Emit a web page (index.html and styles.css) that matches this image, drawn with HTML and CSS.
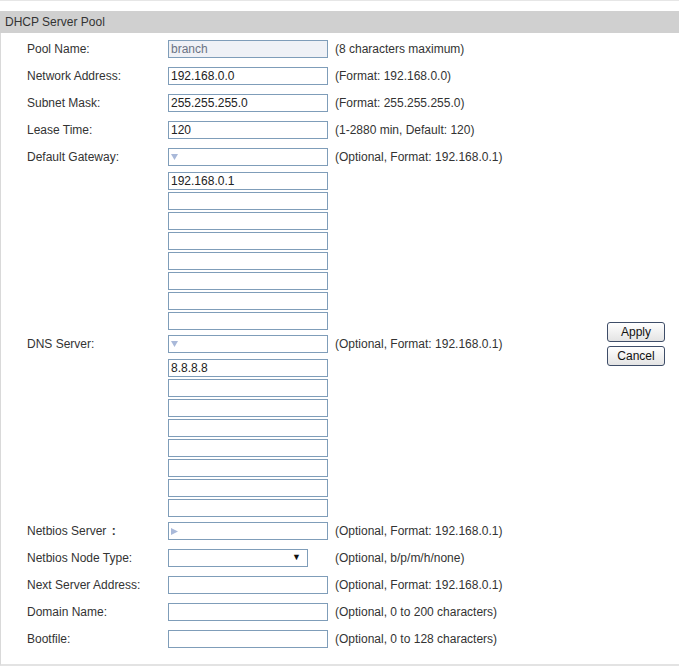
FILE: index.html
```html
<!DOCTYPE html>
<html lang="en">
<head>
    <meta charset="UTF-8">
    <title>DHCP Server Pool</title>
    <link rel="stylesheet" href="styles.css">
</head>
<body>
    <div class="page">
        <div class="panel">
            <div class="panel-title">DHCP Server Pool</div>
            <div class="panel-body">
                <div class="form">
                    <div class="row">
                        <label class="label">Pool Name:</label>
                        <input class="field field-disabled" type="text" value="branch" disabled>
                        <span class="note">(8 characters maximum)</span>
                    </div>
                    <div class="row">
                        <label class="label">Network Address:</label>
                        <input class="field" type="text" value="192.168.0.0">
                        <span class="note">(Format: 192.168.0.0)</span>
                    </div>
                    <div class="row">
                        <label class="label">Subnet Mask:</label>
                        <input class="field" type="text" value="255.255.255.0">
                        <span class="note">(Format: 255.255.255.0)</span>
                    </div>
                    <div class="row">
                        <label class="label">Lease Time:</label>
                        <input class="field" type="text" value="120">
                        <span class="note">(1-2880 min, Default: 120)</span>
                    </div>
                    <div class="row">
                        <label class="label">Default Gateway:</label>
                        <div class="field toggle">
                            <svg width="7" height="6" viewBox="0 0 7 6"><polygon points="0,0 7,0 3.5,6" fill="#a9b9d9"/></svg>
                        </div>
                        <span class="note">(Optional, Format: 192.168.0.1)</span>
                    </div>
                    <div class="list">
                        <input class="field" type="text" value="192.168.0.1">
                        <input class="field" type="text">
                        <input class="field" type="text">
                        <input class="field" type="text">
                        <input class="field" type="text">
                        <input class="field" type="text">
                        <input class="field" type="text">
                        <input class="field" type="text">
                    </div>
                    <div class="row">
                        <label class="label">DNS Server:</label>
                        <div class="field toggle">
                            <svg width="7" height="6" viewBox="0 0 7 6"><polygon points="0,0 7,0 3.5,6" fill="#a9b9d9"/></svg>
                        </div>
                        <span class="note">(Optional, Format: 192.168.0.1)</span>
                    </div>
                    <div class="list">
                        <input class="field" type="text" value="8.8.8.8">
                        <input class="field" type="text">
                        <input class="field" type="text">
                        <input class="field" type="text">
                        <input class="field" type="text">
                        <input class="field" type="text">
                        <input class="field" type="text">
                        <input class="field" type="text">
                    </div>
                    <div class="row">
                        <label class="label">Netbios Server <b class="colon">:</b></label>
                        <div class="field toggle">
                            <svg width="7" height="7" viewBox="0 0 7 7"><polygon points="0,0 7,3.5 0,7" fill="#a9b9d9"/></svg>
                        </div>
                        <span class="note">(Optional, Format: 192.168.0.1)</span>
                    </div>
                    <div class="row">
                        <label class="label">Netbios Node Type:</label>
                        <div class="select-wrap">
                            <select class="select">
                                <option></option>
                                <option>b-node</option>
                                <option>p-node</option>
                                <option>m-node</option>
                                <option>h-node</option>
                            </select>
                        </div>
                        <span class="note">(Optional, b/p/m/h/none)</span>
                    </div>
                    <div class="row">
                        <label class="label">Next Server Address:</label>
                        <input class="field" type="text">
                        <span class="note">(Optional, Format: 192.168.0.1)</span>
                    </div>
                    <div class="row">
                        <label class="label">Domain Name:</label>
                        <input class="field" type="text">
                        <span class="note">(Optional, 0 to 200 characters)</span>
                    </div>
                    <div class="row">
                        <label class="label">Bootfile:</label>
                        <input class="field" type="text">
                        <span class="note">(Optional, 0 to 128 characters)</span>
                    </div>
                </div>
                <div class="actions">
                    <button class="btn">Apply</button>
                    <button class="btn">Cancel</button>
                </div>
            </div>
        </div>
    </div>
</body>
</html>
```

FILE: styles.css
```css
body {
    margin: 0;
    font-family: "Liberation Sans", Arial, sans-serif;
    font-size: 12px;
    color: #333333;
    background: #ffffff;
}

.page {
    border-top: 1px solid #e6e6e6;
    padding-top: 10px;
}

.panel {
    border-left: 1px solid #d9d9d9;
    border-bottom: 2px solid #e3e3e3;
}

.panel-title {
    background-color: #d0d0d0;
    height: 22px;
    line-height: 22px;
    padding-left: 5px;
    margin-left: -1px;
}

.panel-body {
    display: flex;
    align-items: center;
    justify-content: space-between;
    padding: 3px 14px 11px 26px;
}

.row {
    display: flex;
    align-items: center;
    height: 27px;
    box-sizing: border-box;
    padding: 4px 0 5px;
}

.label {
    width: 141px;
    flex: none;
}

.colon {
    margin-left: 2px;
}

.field {
    width: 160px;
    height: 18px;
    box-sizing: border-box;
    border: 1px solid #7f9db9;
    padding: 0 2px;
    margin: 0;
    font-family: "Liberation Sans", Arial, sans-serif;
    font-size: 12px;
    color: #222222;
    background: #ffffff;
    outline: none;
    flex: none;
}

.field-disabled {
    background: #eff1f6;
    color: #6b7384;
}

.toggle {
    display: flex;
    align-items: center;
    padding-left: 2px;
}

.note {
    margin-left: 7px;
}

.list {
    display: flex;
    flex-direction: column;
    gap: 2px;
    padding: 1px 0 1px 141px;
}

.select-wrap {
    position: relative;
    width: 140px;
    height: 18px;
    margin-right: 20px;
    flex: none;
}

.select {
    appearance: none;
    -webkit-appearance: none;
    width: 100%;
    height: 18px;
    box-sizing: border-box;
    border: 1px solid #7f9db9;
    background: #ffffff;
    margin: 0;
    font-family: "Liberation Sans", Arial, sans-serif;
    font-size: 12px;
    outline: none;
}

.select-wrap::after {
    content: "\25BC";
    position: absolute;
    right: 7px;
    top: 3px;
    font-size: 9px;
    color: #111111;
    pointer-events: none;
}

.actions {
    display: flex;
    flex-direction: column;
    gap: 4px;
    margin-bottom: 1px;
}

.btn {
    width: 58px;
    height: 20px;
    box-sizing: border-box;
    border: 1px solid #3e4d68;
    border-radius: 3px;
    background: linear-gradient(#ffffff, #e4e4e4);
    font-family: "Liberation Sans", Arial, sans-serif;
    font-size: 12px;
    color: #111111;
    padding: 0;
    cursor: pointer;
}
```
